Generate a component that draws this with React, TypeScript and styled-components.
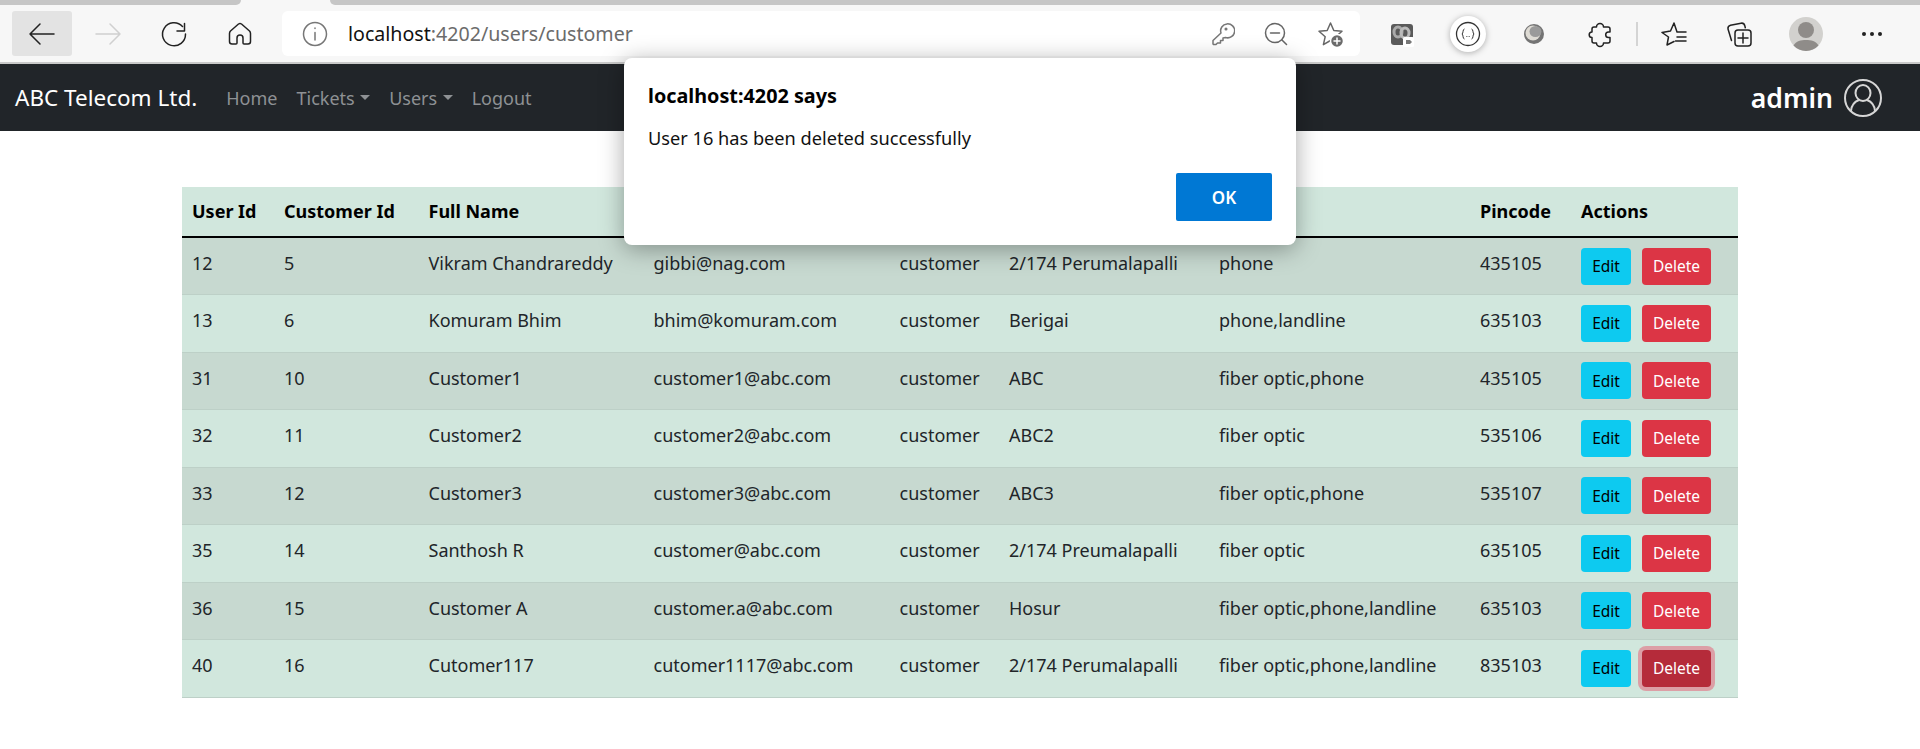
import React from "react";
import styled, { createGlobalStyle } from "styled-components";

const Global = createGlobalStyle`
  html, body {
    margin: 0;
    padding: 0;
    background: #fff;
    font-family: "Noto Sans", "Open Sans", "Liberation Sans", sans-serif;
  }
`;

const Page = styled.div`
  position: relative;
  width: 1920px;
  height: 749px;
  overflow: hidden;
`;

const TabStrip = styled.div`
  display: flex;
  justify-content: space-between;
  height: 5px;
  background: #f7f7f7;
`;

const BackTab = styled.div<{ $left?: boolean }>`
  width: ${(p) => (p.$left ? "241px" : "1590px")};
  background: #c6c6c6;
  border-radius: ${(p) => (p.$left ? "0 0 5px 0" : "0 0 0 5px")};
`;

const Toolbar = styled.div`
  display: flex;
  align-items: center;
  gap: 6px;
  height: 57px;
  padding: 0 12px;
  background: #f7f7f7;
  border-bottom: 2px solid #c9c9c9;
`;

const Slot = styled.div<{ $active?: boolean }>`
  display: flex;
  flex: 0 0 60px;
  align-items: center;
  justify-content: center;
  height: 45px;
  border-radius: 3px;
  background: ${(p) => (p.$active ? "#e3e3e3" : "transparent")};
`;

const Address = styled.div`
  display: flex;
  flex: 0 0 1078px;
  align-items: center;
  height: 45px;
  margin: 0 6px;
  padding: 0 2px 0 19px;
  background: #fff;
  border-radius: 6px;
  box-sizing: border-box;
`;

const Url = styled.div`
  flex: 1;
  margin-left: 19px;
  font-size: 19.6px;
  color: #111;
  span {
    color: #6b6b6b;
  }
`;

const AddressIcon = styled.div`
  display: flex;
  justify-content: center;
  width: 55px;
`;

const Separator = styled.div`
  flex: 0 0 2px;
  height: 24px;
  background: #d4d4d4;
`;

const Navbar = styled.nav`
  display: flex;
  align-items: center;
  height: 67px;
  padding: 0 38px 0 15px;
  background: #212529;
`;

const Brand = styled.a`
  margin-right: 29px;
  font-size: 22.5px;
  color: #fff;
`;

const NavLink = styled.a<{ $caret?: boolean }>`
  display: flex;
  align-items: center;
  margin-right: 19px;
  font-size: 18px;
  color: #8e9194;
  ${(p) =>
    p.$caret &&
    `&::after {
      content: "";
      margin-left: 5.5px;
      border-top: 5px solid #8e9194;
      border-left: 5px solid transparent;
      border-right: 5px solid transparent;
    }`}
`;

const UserBox = styled.div`
  display: flex;
  align-items: center;
  gap: 11px;
  margin-left: auto;
  font-size: 26.6px;
  font-weight: 600;
  color: #fff;
`;

const Table = styled.table`
  width: 1556px;
  margin: 56px 0 0 182px;
  border-collapse: collapse;
  table-layout: fixed;
  background: #d1e7dd;
  color: #212529;
  font-size: 18px;
`;

const Col = styled.col<{ $w: number }>`
  width: ${(p) => p.$w}px;
`;

const HeadCell = styled.th`
  height: 50px;
  padding: 0 10px 2px;
  box-sizing: border-box;
  text-align: left;
  font-weight: 700;
  color: #000;
  border-bottom: 2px solid #000;
`;

const Row = styled.tr<{ $odd: boolean }>`
  height: 57.5px;
  background: ${(p) => (p.$odd ? "#c7d9d0" : "#d1e7dd")};
  border-bottom: 1px solid #bdd0c7;
`;

const Cell = styled.td`
  padding: 0 10px 6px;
  box-sizing: border-box;
`;

const Actions = styled.div`
  display: flex;
  gap: 11px;
  margin-top: 6px;
`;

const Btn = styled.button<{ $kind: "edit" | "delete" | "focus" }>`
  height: 37px;
  padding: 0;
  width: ${(p) => (p.$kind === "edit" ? 50 : 69)}px;
  border: 0;
  border-radius: 4px;
  font-family: inherit;
  font-size: 15.5px;
  color: ${(p) => (p.$kind === "edit" ? "#000" : "#fff")};
  background: ${(p) =>
    p.$kind === "edit" ? "#0dcaf0" : p.$kind === "delete" ? "#dc3545" : "#b52b3a"};
  box-shadow: ${(p) => (p.$kind === "focus" ? "0 0 0 4px #dc9fa6" : "none")};
`;

const Dialog = styled.div`
  position: absolute;
  left: 624px;
  top: 58px;
  width: 672px;
  height: 187px;
  padding: 24px 24px 24px;
  box-sizing: border-box;
  display: flex;
  flex-direction: column;
  background: #fff;
  border-radius: 8px;
  box-shadow: 0 4px 24px rgba(0, 0, 0, 0.35);
`;

const DialogTitle = styled.div`
  font-size: 19.8px;
  font-weight: 700;
  color: #000;
`;

const DialogText = styled.div`
  margin-top: 17px;
  font-size: 18.2px;
  color: #111;
`;

const OkButton = styled.button`
  align-self: flex-end;
  width: 96px;
  height: 48px;
  margin-top: auto;
  border: 0;
  border-radius: 2px;
  background: #0078d4;
  color: #fff;
  font-family: inherit;
  font-size: 17px;
  font-weight: 600;
`;

const CodeBadge = styled.svg`
  filter: drop-shadow(0 1px 3px rgba(0, 0, 0, 0.3));
`;

const COLS = [92, 144.5, 225, 246, 109.5, 210, 261, 101, 167];
const HEADS = ["User Id", "Customer Id", "Full Name", "", "", "", "", "Pincode", "Actions"];
const ROWS = [
  ["12", "5", "Vikram Chandrareddy", "gibbi@nag.com", "customer", "2/174 Perumalapalli", "phone", "435105"],
  ["13", "6", "Komuram Bhim", "bhim@komuram.com", "customer", "Berigai", "phone,landline", "635103"],
  ["31", "10", "Customer1", "customer1@abc.com", "customer", "ABC", "fiber optic,phone", "435105"],
  ["32", "11", "Customer2", "customer2@abc.com", "customer", "ABC2", "fiber optic", "535106"],
  ["33", "12", "Customer3", "customer3@abc.com", "customer", "ABC3", "fiber optic,phone", "535107"],
  ["35", "14", "Santhosh R", "customer@abc.com", "customer", "2/174 Preumalapalli", "fiber optic", "635105"],
  ["36", "15", "Customer A", "customer.a@abc.com", "customer", "Hosur", "fiber optic,phone,landline", "635103"],
  ["40", "16", "Cutomer117", "cutomer1117@abc.com", "customer", "2/174 Perumalapalli", "fiber optic,phone,landline", "835103"],
];

function Ico({ color = "#222", children }: { color?: string; children: React.ReactNode }) {
  return (
    <svg width={28} height={28} viewBox="0 0 28 28" fill="none" stroke={color} strokeWidth="1.5" strokeLinecap="round" strokeLinejoin="round">
      {children}
    </svg>
  );
}

export default function App() {
  return (
    <Page>
      <Global />
      <TabStrip>
        <BackTab $left />
        <BackTab />
      </TabStrip>
      <Toolbar>
        <Slot $active>
          <Ico><path d="M26 14H2M12 4 2 14l10 10" /></Ico>
        </Slot>
        <Slot>
          <Ico color="#d0d0d0"><path d="M2 14h24M16 4l10 10-10 10" /></Ico>
        </Slot>
        <Slot>
          <Ico>
            <path d="M25.500 14A11.500 11.500 0 1 1 22.500 6.500M24.500 3.500V11H17" />
          </Ico>
        </Slot>
        <Slot>
          <Ico>
            <path d="M12.500 4 4.500 11Q3.500 12 3.500 13.500V21.500Q3.500 24 6 24H10Q11 24 11 23V18A3 3 0 0 1 17 18V23Q17 24 18 24H22Q24.500 24 24.500 21.500V13.500Q24.500 12 23.500 11L15.500 4Q14 3 12.500 4Z" />
          </Ico>
        </Slot>
        <Address>
          <Ico color="#777">
            <circle cx="14" cy="14" r="11.500" />
            <path d="M14 12.500V20M14 8v.5" />
          </Ico>
          <Url>
            localhost<span>:4202/users/customer</span>
          </Url>
          <AddressIcon>
            <Ico color="#777">
              <path d="M6 24v-3.500L14 13A7 7 0 1 1 18.500 17.500L16 18v2.500h-2.500V23h-3L9 24.500H6.500z" />
              <circle cx="19" cy="9" r=".8" />
            </Ico>
          </AddressIcon>
          <AddressIcon>
            <Ico color="#666">
              <circle cx="13" cy="13" r="9.500" />
              <path d="M8.500 13h9M20 20l4.500 4.500" />
            </Ico>
          </AddressIcon>
          <AddressIcon>
            <Ico color="#666">
              <path d="M13.500 3l3.300 7.500 8.200.8-6.200 5.400 1.800 8-7.100-4.200-7.100 4.200 1.800-8-6.200-5.400 8.200-.8z" />
              <circle cx="20" cy="21" r="6.500" fill="#6b6b6b" stroke="#fff" />
              <path d="M20 18v6M17 21h6" stroke="#fff" />
            </Ico>
          </AddressIcon>
        </Address>
        <Slot>
          <Ico color="none">
            <rect x="3" y="4" width="22" height="21" rx="3" fill="#5a5a5a" />
            <ellipse cx="10" cy="12" rx="4" ry="5" stroke="#aaa" strokeWidth="3" />
            <ellipse cx="17" cy="13" rx="4" ry="5" stroke="#bbb" strokeWidth="3" />
            <rect x="15" y="17" width="11" height="10" rx="1.500" fill="#fff" />
            <path d="M18 20h4l2 2-2 2h-4z" fill="#777" />
          </Ico>
        </Slot>
        <Slot>
          <CodeBadge width="40" height="40" viewBox="0 0 40 40" fill="none">
            <circle cx="20" cy="20" r="18" fill="#fff" />
            <circle cx="20" cy="20" r="11.500" stroke="#333" strokeWidth="1.300" />
            <path d="M16.500 15c-2 0-1 4.500-2.500 5 1.500.5.500 5 2.500 5M23.500 15c2 0 1 4.500 2.500 5-1.500.5-.5 5-2.500 5M18 22.500h.6M19.700 22.500h.6M21.400 22.500h.6" stroke="#333" strokeWidth="1" />
          </CodeBadge>
        </Slot>
        <Slot>
          <svg width="24" height="24" viewBox="0 0 24 24">
            <circle cx="12" cy="12" r="10" fill="#747474" />
            <ellipse cx="11" cy="11" rx="7.500" ry="7.500" fill="#dedbd4" />
            <ellipse cx="13.500" cy="9.500" rx="6" ry="5.500" fill="#9a9a9a" />
          </svg>
        </Slot>
        <Slot>
          <Ico>
            <path d="M10.500 7a3.500 3.500 0 0 1 7 0h4.500a2 2 0 0 1 2 2v3h-1.500a2.800 2.800 0 0 0 0 5.600H24V21a2 2 0 0 1-2 2h-4.500a3.500 3.500 0 0 1-7 0H8a2 2 0 0 1-2-2v-3.400a2.800 2.800 0 0 1 0-5.600V9a2 2 0 0 1 2-2z" />
          </Ico>
        </Slot>
        <Separator />
        <Slot>
          <Ico>
            <path d="M19 12h-2L14 3l-3.500 8L2 12.500 8.500 17 7 25l7-3.500M18.500 12H26M17 17h9M15.500 21H26" />
          </Ico>
        </Slot>
        <Slot>
          <Ico>
            <path d="M5.500 20.500 2 9q-.5-3 2.500-3.800L15 3.200q3-.5 3.800 2.500l.5 2" />
            <rect x="9" y="10" width="16" height="16" rx="3" />
            <path d="M17 13v10M12 18h10" />
          </Ico>
        </Slot>
        <Slot>
          <svg width="34" height="34" viewBox="0 0 34 34">
            <circle cx="17" cy="17" r="17" fill="#d2d1ce" />
            <circle cx="17" cy="13" r="8" fill="#8f8c89" />
            <path d="M4.500 28.500C7 24 12 23 17 23s10 1 12.500 5.500a17 17 0 0 1-25 0Z" fill="#8f8c89" />
          </svg>
        </Slot>
        <Slot>
          <svg width="22" height="6" viewBox="0 0 22 6" fill="#222">
            <circle cx="3" cy="3" r="2" />
            <circle cx="11" cy="3" r="2" />
            <circle cx="19" cy="3" r="2" />
          </svg>
        </Slot>
      </Toolbar>
      <Navbar>
        <Brand>ABC Telecom Ltd.</Brand>
        <NavLink>Home</NavLink>
        <NavLink $caret>Tickets</NavLink>
        <NavLink $caret>Users</NavLink>
        <NavLink>Logout</NavLink>
        <UserBox>
          admin
          <svg width="38" height="38" viewBox="0 0 38 38" fill="none" stroke="#d6d6d6" strokeWidth="2">
            <circle cx="19" cy="19" r="18" />
            <ellipse cx="19" cy="14" rx="7.500" ry="8" />
            <path d="M7 32c.5-6 4-9.500 8-11M31 32c-.5-6-4-9.500-8-11" />
          </svg>
        </UserBox>
      </Navbar>
      <Table>
        <colgroup>
          {COLS.map((w, i) => (
            <Col key={i} $w={w} />
          ))}
        </colgroup>
        <thead>
          <tr>
            {HEADS.map((h, i) => (
              <HeadCell key={i}>{h}</HeadCell>
            ))}
          </tr>
        </thead>
        <tbody>
          {ROWS.map((r, i) => (
            <Row key={r[0]} $odd={i % 2 === 0}>
              {r.map((c, j) => (
                <Cell key={j}>{c}</Cell>
              ))}
              <Cell>
                <Actions>
                  <Btn $kind="edit">Edit</Btn>
                  <Btn $kind={i === ROWS.length - 1 ? "focus" : "delete"}>Delete</Btn>
                </Actions>
              </Cell>
            </Row>
          ))}
        </tbody>
      </Table>
      <Dialog>
        <DialogTitle>localhost:4202 says</DialogTitle>
        <DialogText>User 16 has been deleted successfully</DialogText>
        <OkButton>OK</OkButton>
      </Dialog>
    </Page>
  );
}
